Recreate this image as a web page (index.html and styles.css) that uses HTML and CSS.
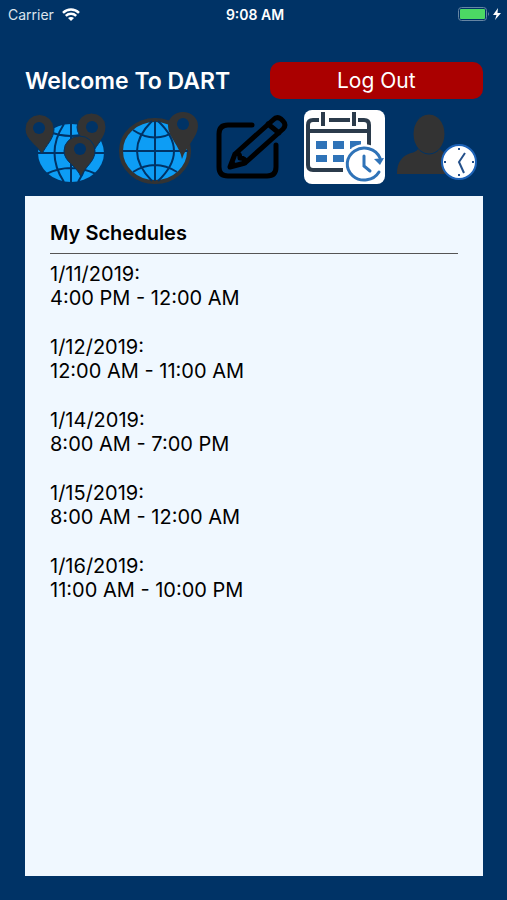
FILE: index.html
```
<!DOCTYPE html>
<html lang="en">
  <head>
    <meta charset="utf-8">
    <meta name="viewport" content="width=device-width, initial-scale=1">
    <title>DART</title>
    <link rel="stylesheet" href="styles.css">
  </head>
  <body>
    <div class="status-bar">
      <div class="carrier">
        <span>Carrier</span>
        <svg class="wifi" viewBox="0 0 18 13" aria-hidden="true">
          <path d="M1 4.8C5.500 .5 12.500 .5 17 4.800M3.800 7.800C6.800 5 11.200 5 14.200 7.800" />
          <path class="wifi-dot" d="M6 10C7.500 8.500 10.500 8.500 12 10L9 13Z" />
        </svg>
      </div>
      <span class="time">9:08 AM</span>
      <div class="power">
        <svg class="battery" viewBox="0 0 44 14" aria-hidden="true">
          <rect class="battery-case" x=".5" y=".5" width="28" height="13" rx="3" />
          <rect class="battery-level" x="2" y="2" width="25" height="10" rx="1" />
          <path class="battery-tip" d="M30 5Q32 7 30 9Z" />
          <path class="battery-bolt" d="M40 1L35 8H38.500L37 13L43 6H39.500Z" />
        </svg>
      </div>
    </div>

    <header class="header">
      <h1>Welcome To DART</h1>
      <button class="logout" type="button">Log Out</button>
    </header>

    <nav class="nav">
      <a href="#" aria-label="All locations">
        <svg viewBox="0 0 81 75">
          <ellipse class="globe" cx="46" cy="43" rx="33" ry="29" />
          <path class="grid-line" d="M46 14V72M13 43H79M22 21Q46 31 70 21M21 64Q46 52 71 64M39 14Q20 43 39 72M53 14Q72 43 53 72" />
          <path class="pin pin-edge" d="M17 44C12 35 0 30 0 19A14.500 14.500 0 0 1 29 19C29 29 21 35 17 44Z" />
          <path class="pin pin-edge" d="M68 43C65 34 52 28 52 17A14.500 14 0 0 1 81 17C81 28 71 34 68 43Z" />
          <path class="pin pin-edge" d="M56 67C52 56 39 52 39 41A15.500 15 0 0 1 70 41C70 52 60 56 56 67Z" />
          <circle class="pin-hole" cx="14" cy="18" r="6" />
          <circle class="pin-hole" cx="67" cy="17" r="6" />
          <circle class="pin-hole" cx="55" cy="39" r="6" />
        </svg>
      </a>
      <a href="#" aria-label="My location">
        <svg viewBox="0 0 81 75">
          <ellipse class="globe globe-ring" cx="37" cy="41" rx="34" ry="31" />
          <path class="grid-line" d="M37 11V71M5 41H70M15 20Q37 35 59 20M15 62Q37 48 59 62M34 11Q4 41 34 71M40 11Q72 41 40 71" />
          <path class="pin" d="M64 49C62 36 50 27 50 16A15 14 0 0 1 80 16C80 27 68 36 64 49Z" />
          <circle class="pin-hole" cx="65" cy="14" r="6" />
        </svg>
      </a>
      <a href="#" aria-label="Edit">
        <svg viewBox="0 0 81 75">
          <path class="pencil" d="M41 15H17Q8 15 8 24V57Q8 66 17 66H56Q65 66 65 57V35" />
          <path class="pencil" d="M19 57L24 44L62 10Q66 6 70 9L72 11Q76 15 72 19L34 53L19 57ZM57 14L68 23M24 44Q29 42 29 48Q35 48 34 53" />
          <path class="pencil-lead" d="M18 59L21 50L27 55Z" />
        </svg>
      </a>
      <a href="#" aria-label="My schedules" aria-current="page">
        <svg viewBox="0 0 81 75">
          <rect class="calendar-card" width="81" height="74" rx="8" />
          <path class="calendar-frame" d="M15 10H9Q4 10 4 15V55Q4 60 9 60H39M25 10H46M54 10H60Q65 10 65 15V37M4 21H65" />
          <path class="calendar-frame" d="M19 4V14M50 4V14M17 4H21M17 14H21M48 4H52M48 14H52" />
          <path class="calendar-day" d="M12 31H23V39H12ZM29 31H40V39H29ZM46 31H57V39H46ZM12 45H23V52H12ZM29 45H40V52H29Z" />
          <circle class="calendar-gap" cx="60" cy="54" r="20" />
          <path class="calendar-clock" d="M76 48A17 16 0 1 0 75 62" />
          <path class="calendar-hand" d="M60 46V56L66 61" />
          <path class="calendar-day" d="M70 49L80 48L76 55Z" />
        </svg>
      </a>
      <a href="#" aria-label="Clock in">
        <svg viewBox="0 0 81 75">
          <path class="pin" d="M0 64C0 52 5 46 14 43Q19 42 21 39L43 39Q46 43 51 44V64Z" />
          <ellipse class="pin head" cx="32" cy="24" rx="16" ry="20" />
          <circle class="clock-face" cx="62" cy="52" r="17" />
          <path class="clock-hand" d="M68 43L62 52L67 63M62 38V40M62 64V66M47 52H49M75 52H77" />
        </svg>
      </a>
    </nav>

    <main class="panel">
      <h2>My Schedules</h2>
      <ul class="schedules">
        <li>1/11/2019:<br>4:00 PM - 12:00 AM</li>
        <li>1/12/2019:<br>12:00 AM - 11:00 AM</li>
        <li>1/14/2019:<br>8:00 AM - 7:00 PM</li>
        <li>1/15/2019:<br>8:00 AM - 12:00 AM</li>
        <li>1/16/2019:<br>11:00 AM - 10:00 PM</li>
      </ul>
    </main>
  </body>
</html>
```

FILE: styles.css
```
* {
  box-sizing: border-box;
}

body {
  display: flex;
  flex-direction: column;
  min-height: 100vh;
  margin: 0;
  padding-bottom: 24px;
  background-color: #003366;
  color: white;
  font-family: Inter, sans-serif;
}

h1,
h2 {
  margin: 0;
  font-weight: 600;
}

.status-bar {
  display: grid;
  grid-template-columns: 1fr auto 1fr;
  align-items: center;
  height: 28px;
  padding: 0 5px 0 8px;
  font-size: 14px;
}

.carrier {
  display: flex;
  align-items: center;
  gap: 8px;
  color: #dbe4ed;
}

.wifi {
  width: 18px;
  height: 13px;
  fill: none;
  stroke: white;
  stroke-width: 2.5;
}

.wifi-dot {
  fill: white;
  stroke: none;
}

.time {
  font-weight: 600;
}

.power {
  display: flex;
  justify-content: flex-end;
}

.battery {
  width: 44px;
  height: 14px;
}

.battery-case {
  fill: none;
  stroke: #6685a3;
}

.battery-level {
  fill: #4cd964;
}

.battery-tip {
  fill: #6685a3;
}

.battery-bolt {
  fill: white;
}

.header {
  display: grid;
  grid-template-columns: 1fr 1fr;
  gap: 31px;
  align-items: center;
  margin: 34px 24px 0 25px;
}

h1 {
  font-size: 23px;
  white-space: nowrap;
}

.logout {
  height: 37px;
  padding: 0;
  border: 0;
  border-radius: 10px;
  background-color: #aa0000;
  color: white;
  font-family: inherit;
  font-size: 21px;
  cursor: pointer;
}

.nav {
  display: grid;
  grid-template-columns: repeat(5, 1fr);
  gap: 12px;
  margin: 11px 29px 0 25px;
}

.nav svg {
  display: block;
  width: 100%;
}

.globe {
  fill: #0d9df5;
}

.globe-ring {
  stroke: #333;
  stroke-width: 4;
}

.grid-line {
  fill: none;
  stroke: #003366;
  stroke-width: 2;
}

.pin {
  fill: #333;
}

.pin-edge {
  stroke: #003366;
  stroke-width: 1;
}

.pin-hole {
  fill: #003366;
}

.head {
  stroke: #003366;
  stroke-width: 1;
}

.pencil {
  fill: none;
  stroke: black;
  stroke-width: 5;
  stroke-linecap: round;
  stroke-linejoin: round;
}

.calendar-card {
  fill: white;
}

.calendar-frame {
  fill: none;
  stroke: #2b3b4b;
  stroke-width: 4;
}

.calendar-day {
  fill: #2f73b8;
}

.calendar-gap {
  fill: white;
}

.calendar-clock,
.calendar-hand {
  fill: none;
  stroke: #2f73b8;
  stroke-width: 3;
  stroke-linecap: round;
}

.clock-face {
  fill: white;
  stroke: #1d63b8;
  stroke-width: 2;
}

.clock-hand {
  fill: none;
  stroke: #24508a;
  stroke-width: 2;
}

/* fills whatever height is left under the icons */
.panel {
  flex: 1;
  margin: 11px 24px 0 25px;
  padding: 24px 25px;
  background-color: #f0f8ff;
  color: black;
}

h2 {
  padding-bottom: 6px;
  border-bottom: 1px solid #555;
  font-size: 20px;
  line-height: 27px;
}

.schedules {
  display: grid;
  gap: 25px;
  margin: 0;
  padding: 8px 0 0;
  list-style: none;
  font-size: 20px;
  line-height: 24px;
}
```
